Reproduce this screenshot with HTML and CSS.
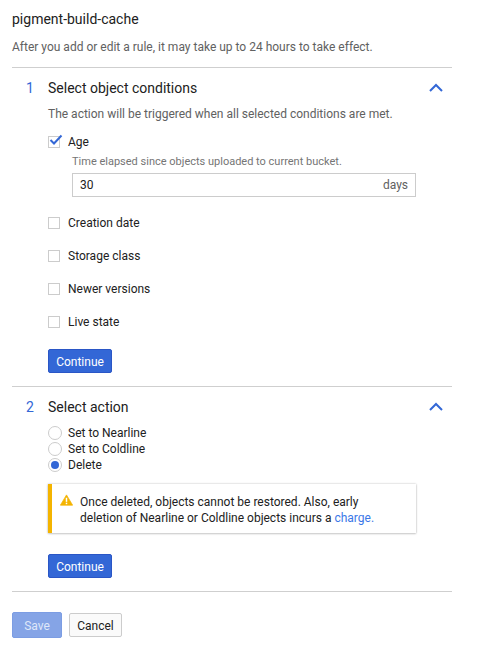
FILE: index.html
```html
<!DOCTYPE html>
<html lang="en">
<head>
<meta charset="utf-8">
<title>pigment-build-cache</title>
<link rel="stylesheet" href="styles.css">
</head>
<body>
<main class="page">
  <h1 class="title">pigment-build-cache</h1>
  <p class="intro">After you add or edit a rule, it may take up to 24 hours to take effect.</p>

  <section class="step step-one">
    <header class="step-head">
      <span class="step-num">1</span>
      <h2 class="step-title">Select object conditions</h2>
      <svg class="chevron" viewBox="0 0 14 9"><path d="M1 8 L7 2 L13 8" fill="none" stroke="#3367d6" stroke-width="2"/></svg>
    </header>
    <div class="step-body">
      <p class="step-desc">The action will be triggered when all selected conditions are met.</p>
      <div class="check-row check-age">
        <span class="box"><svg class="tick" viewBox="0 0 14 12"><path d="M1.5 6 L5 9.5 L12.5 1.5" fill="none" stroke="#3367d6" stroke-width="2"/></svg></span>
        <span class="label">Age</span>
      </div>
      <div class="age-detail">
        <p class="hint">Time elapsed since objects uploaded to current bucket.</p>
        <div class="field"><span class="field-value">30</span><span class="field-unit">days</span></div>
      </div>
      <div class="check-row"><span class="box"></span><span class="label">Creation date</span></div>
      <div class="check-row"><span class="box"></span><span class="label">Storage class</span></div>
      <div class="check-row"><span class="box"></span><span class="label">Newer versions</span></div>
      <div class="check-row"><span class="box"></span><span class="label">Live state</span></div>
      <button class="btn btn-primary btn-first" type="button">Continue</button>
    </div>
  </section>

  <section class="step step-two">
    <header class="step-head">
      <span class="step-num">2</span>
      <h2 class="step-title">Select action</h2>
      <svg class="chevron" viewBox="0 0 14 9"><path d="M1 8 L7 2 L13 8" fill="none" stroke="#3367d6" stroke-width="2"/></svg>
    </header>
    <div class="step-body">
      <div class="radio-row"><span class="radio"></span><span class="label">Set to Nearline</span></div>
      <div class="radio-row"><span class="radio"></span><span class="label">Set to Coldline</span></div>
      <div class="radio-row"><span class="radio radio-on"></span><span class="label">Delete</span></div>
      <div class="alert">
        <svg class="alert-icon" viewBox="0 0 14 12"><path d="M7 0.5 L13.6 11.6 L0.4 11.6 Z" fill="#f4b400" stroke="#f4b400" stroke-width="0.8" stroke-linejoin="round"/><rect x="6.2" y="3.6" width="1.6" height="4.4" fill="#fff"/><rect x="6.2" y="8.9" width="1.6" height="1.6" fill="#fff"/></svg>
        <p class="alert-text">Once deleted, objects cannot be restored. Also, early deletion of Nearline or Coldline objects incurs a <a class="link" href="#">charge.</a></p>
      </div>
      <button class="btn btn-primary btn-second" type="button">Continue</button>
    </div>
  </section>

  <div class="actions">
    <button class="btn btn-save" type="button">Save</button>
    <button class="btn btn-cancel" type="button">Cancel</button>
  </div>
</main>
</body>
</html>
```
FILE: styles.css
```css
* { box-sizing: border-box; }
html, body { margin: 0; padding: 0; background: #fff; }
body { font-family: Roboto, "Liberation Sans", sans-serif; color: #212121; font-size: 12px; }
.page { width: 440px; margin-left: 12px; padding-top: 11px; }
.title { margin: 0; font-size: 14px; font-weight: 400; line-height: 16px; color: #212121; }
.intro { margin: 0; padding-top: 10px; font-size: 12px; line-height: 20px; color: #616161; height: 40px; }
.step { border-top: 1px solid #cfcfcf; }
.step-head { display: flex; align-items: center; height: 38px; padding: 2px 9px 0 0; }
.step-num { width: 36px; padding-left: 14px; font-size: 14px; color: #3367d6; }
.step-title { flex: 1; margin: 0; font-size: 14px; font-weight: 400; color: #212121; }
.chevron { width: 14px; height: 9px; display: block; margin-bottom: 2px; }
.step-body { padding-left: 36px; }
.step-desc { margin: 0; font-size: 12px; line-height: 16px; color: #616161; }
.check-row { display: flex; align-items: center; height: 16px; margin-bottom: 17px; }
.check-age { margin-top: 10px; margin-bottom: 0; height: 20px; }
.box { width: 12px; height: 12px; border: 1px solid #ccc; margin-right: 8px; position: relative; flex: none; background: #fff; }
.tick { position: absolute; left: 0; top: -3px; width: 14px; height: 12px; }
.label { font-size: 12px; line-height: 16px; color: #212121; }
.age-detail { padding-left: 24px; width: 368px; margin-bottom: 18px; }
.hint { margin: 0; font-size: 11px; line-height: 20px; color: #757575; height: 21px; }
.field { display: flex; justify-content: space-between; align-items: center; height: 24px; border: 1px solid #ccc; padding: 0 7px; }
.field-value { font-size: 12px; color: #212121; }
.field-unit { font-size: 12px; color: #616161; }
.btn { font-family: inherit; font-size: 12px; border-radius: 2px; display: block; padding: 1px 0 0; }
.btn-primary { width: 64px; height: 24px; background: #3367d6; border: 1px solid #2a56c6; color: #fff; }
.btn-first { margin-top: 19px; margin-bottom: 13px; }
.radio-row { display: flex; align-items: center; height: 16px; }
.radio { width: 14px; height: 14px; border: 1px solid #ccc; border-radius: 50%; margin-right: 6px; flex: none; background: #fff; position: relative; }
.radio-on::after { content: ""; position: absolute; left: 2px; top: 2px; width: 8px; height: 8px; border-radius: 50%; background: #3367d6; }
.alert { display: flex; width: 368px; height: 49px; margin-top: 11px; border-left: 4px solid #f4b400; background: #fff; box-shadow: 0 0 2px rgba(0,0,0,.25), 0 1px 2px rgba(0,0,0,.15); padding: 10px 40px 0 8px; }
.alert-icon { width: 13px; height: 12px; flex: none; margin-right: 7px; }
.alert-text { margin: 0; font-size: 12px; line-height: 16px; color: #212121; }
.link { color: #3b78e7; text-decoration: none; }
.btn-second { margin-top: 21px; margin-bottom: 13px; }
.step-two { border-bottom: 1px solid #cfcfcf; }
.actions { display: flex; align-items: center; gap: 7px; margin-top: 20px; }
.btn-save { width: 50px; height: 26px; background: #85a4e6; border: 1px solid #7c9de3; color: #dfe7f9; }
.btn-cancel { width: 53px; height: 24px; background: #fafafa; border: 1px solid #ccc; color: #212121; }
```
